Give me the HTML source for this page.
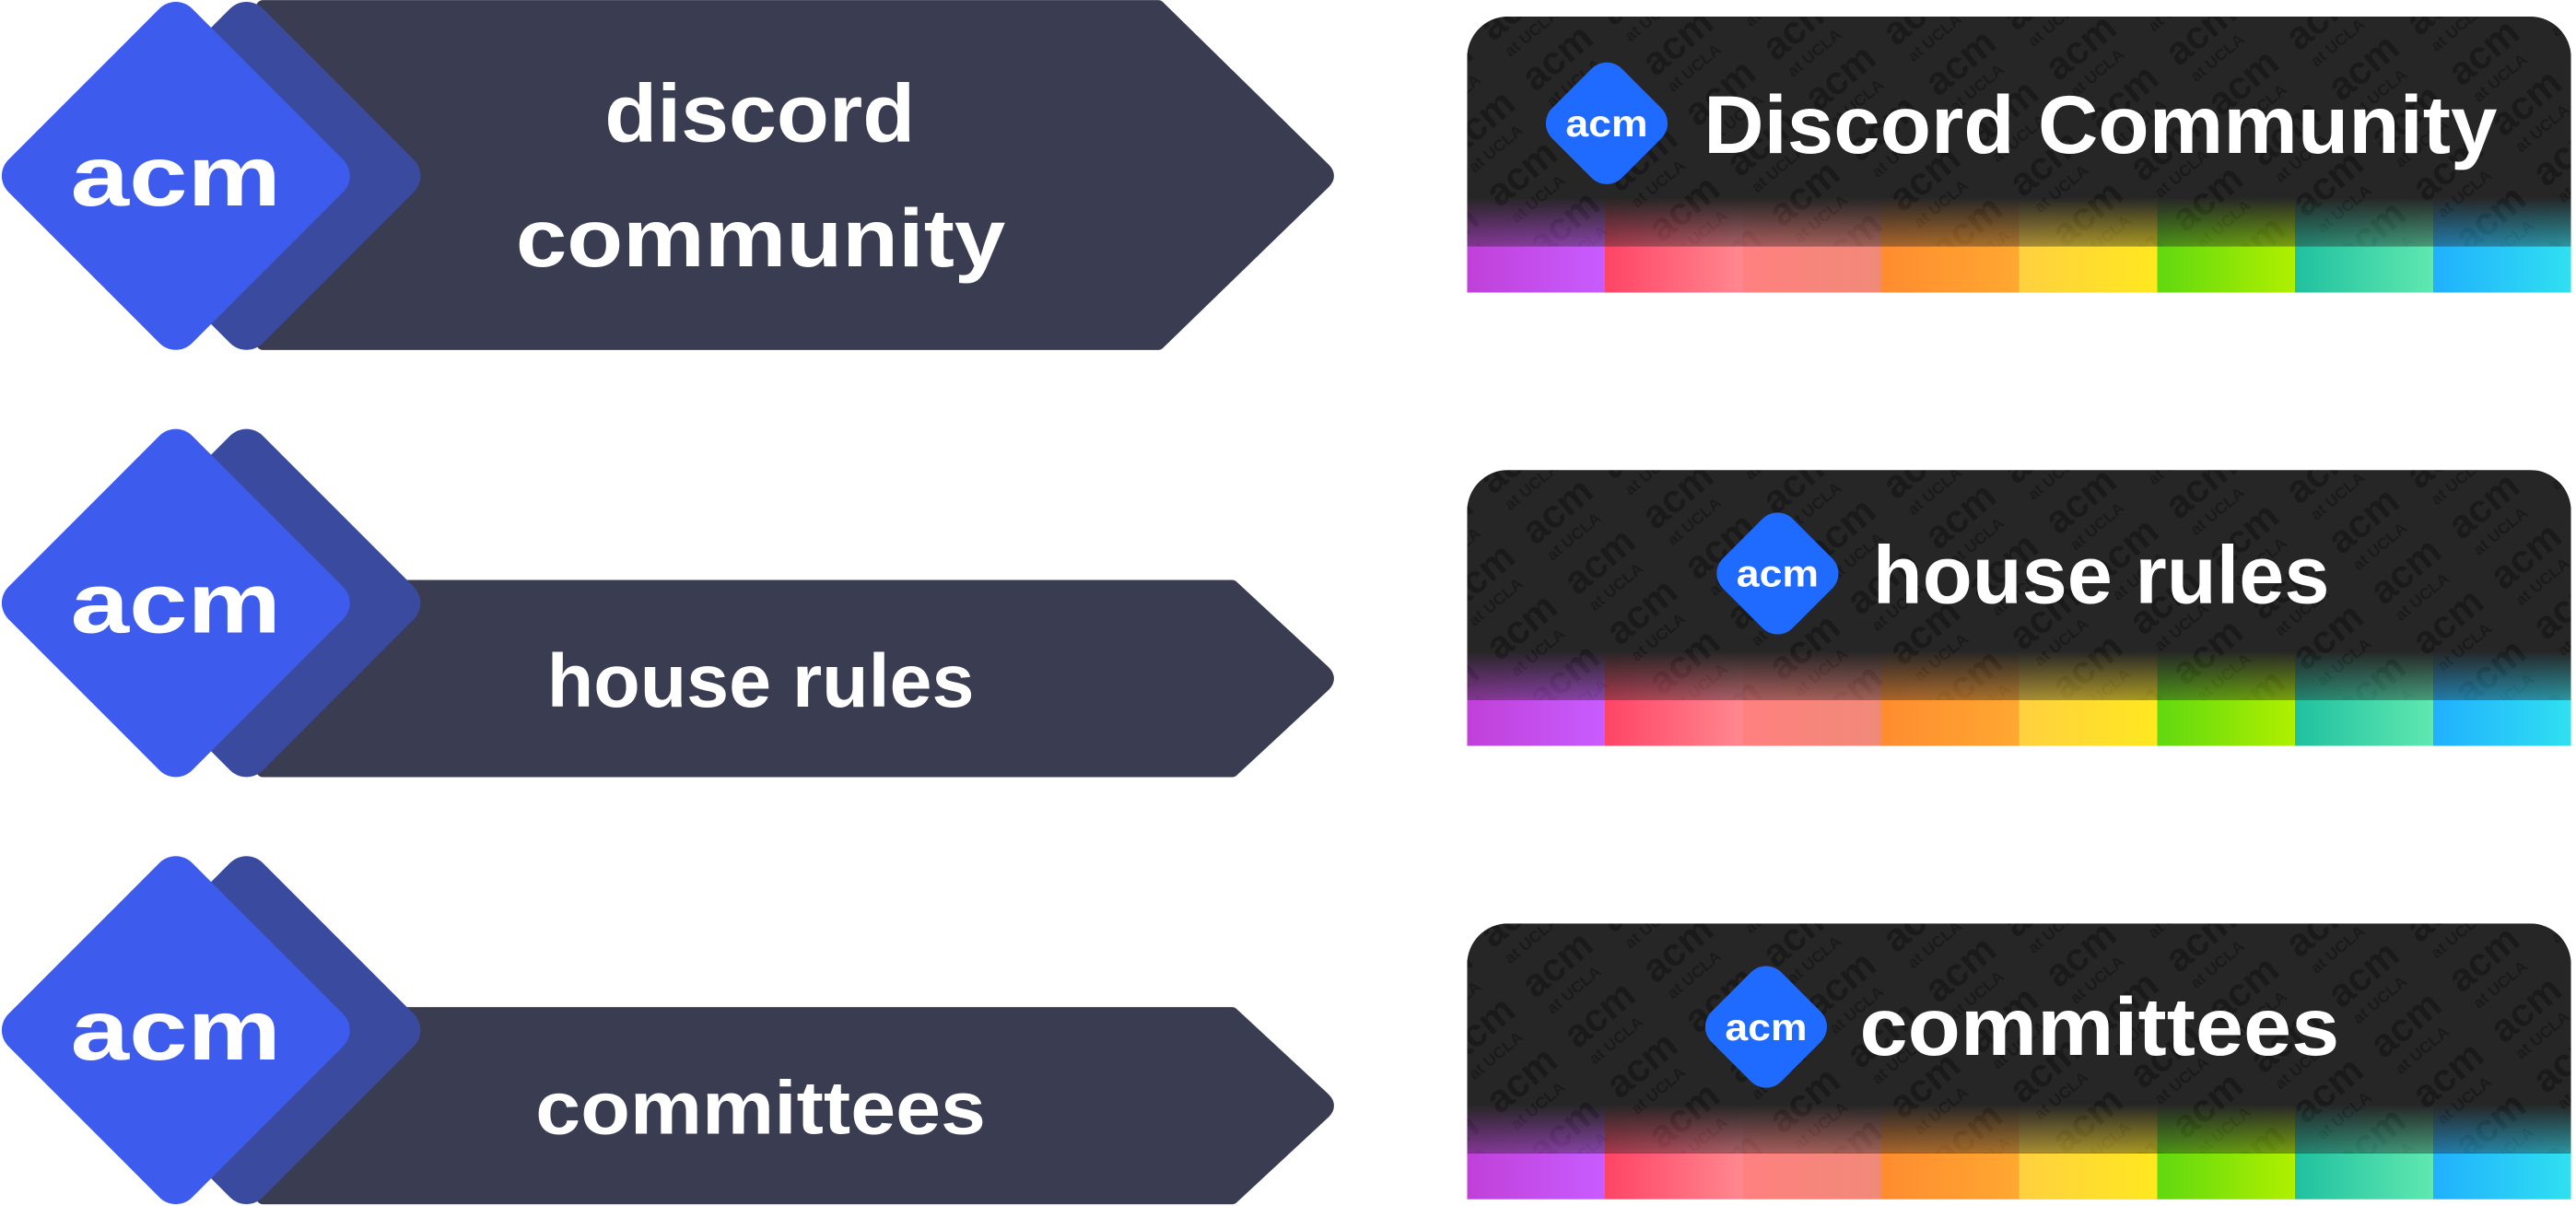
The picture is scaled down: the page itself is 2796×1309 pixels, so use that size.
<!DOCTYPE html>
<html><head><meta charset="utf-8"><style>
html,body{margin:0;padding:0;background:#fff;width:2796px;height:1309px;overflow:hidden}
svg{display:block}
text{font-family:"Liberation Sans",sans-serif;font-weight:bold}
</style></head><body>
<svg width="2796" height="1309" viewBox="0 0 1568 734" xmlns="http://www.w3.org/2000/svg">
<defs>
<linearGradient id="st" gradientUnits="userSpaceOnUse" x1="0" y1="0" x2="672" y2="0">
<stop offset="0" stop-color="#c040d8"/><stop offset=".125" stop-color="#c85cff"/>
<stop offset=".125" stop-color="#ff4466"/><stop offset=".25" stop-color="#ff8890"/>
<stop offset=".25" stop-color="#ff8080"/><stop offset=".375" stop-color="#f08a78"/>
<stop offset=".375" stop-color="#ff8c30"/><stop offset=".5" stop-color="#ffa830"/>
<stop offset=".5" stop-color="#ffd040"/><stop offset=".625" stop-color="#ffe820"/>
<stop offset=".625" stop-color="#60d810"/><stop offset=".75" stop-color="#b0f000"/>
<stop offset=".75" stop-color="#20c0a0"/><stop offset=".875" stop-color="#60e8b0"/>
<stop offset=".875" stop-color="#20b0ff"/><stop offset="1" stop-color="#30e0f0"/>
</linearGradient>
<linearGradient id="fv" x1="0" y1="0" x2="0" y2="1">
<stop offset="0" stop-color="#fff" stop-opacity="0"/><stop offset="1" stop-color="#fff" stop-opacity=".6"/>
</linearGradient>
<mask id="fm" maskUnits="userSpaceOnUse" x="0" y="110" width="672" height="30"><rect x="0" y="110" width="672" height="30" fill="url(#fv)"/></mask>
<pattern id="pt" width="62" height="40" patternUnits="userSpaceOnUse" patternTransform="rotate(-40)">
<rect width="62" height="40" fill="#262626"/>
<text x="2" y="22" font-size="24" fill="#1a1a1a" font-family="Liberation Sans" font-weight="bold">acm</text>
<text x="4" y="36" font-size="10" fill="#1a1a1a" font-family="Liberation Sans" font-weight="bold">at UCLA</text>
</pattern>
<clipPath id="cc"><path d="M0,25 a25,25 0 0 1 25,-25 H647 a25,25 0 0 1 25,25 V168 H0 Z"/></clipPath>
</defs>

<!-- left banner 1 -->
<path d="M160,4 H705 L806,103 Q810,107 806,111 L705,209 H160 L250,107 Z" fill="#3a3d52" stroke="#3a3d52" stroke-width="8" stroke-linejoin="round"/>
<rect x="71" y="28" width="158" height="158" rx="14" transform="rotate(45 150 107)" fill="#3a4b9f"/>
<rect x="28" y="28" width="158" height="158" rx="14" transform="rotate(45 107 107)" fill="#3d5bec"/>
<text x="43" y="125" font-size="52" fill="#fff" textLength="128" lengthAdjust="spacingAndGlyphs">acm</text>
<text x="368" y="86" font-size="50" fill="#fff" textLength="189" lengthAdjust="spacingAndGlyphs">discord</text>
<text x="314" y="162" font-size="50" fill="#fff" textLength="298" lengthAdjust="spacingAndGlyphs">community</text>

<!-- left banner 2 -->
<path d="M160,357 H750 L806,409 Q810,413 806,417 L750,469 H160 Z" fill="#3a3d52" stroke="#3a3d52" stroke-width="8" stroke-linejoin="round"/>
<rect x="71" y="288" width="158" height="158" rx="14" transform="rotate(45 150 367)" fill="#3a4b9f"/>
<rect x="28" y="288" width="158" height="158" rx="14" transform="rotate(45 107 367)" fill="#3d5bec"/>
<text x="43" y="385" font-size="52" fill="#fff" textLength="128" lengthAdjust="spacingAndGlyphs">acm</text>
<text x="333" y="430" font-size="46" fill="#fff" textLength="260" lengthAdjust="spacingAndGlyphs">house rules</text>

<!-- left banner 3 -->
<path d="M160,617 H750 L806,669 Q810,673 806,677 L750,729 H160 Z" fill="#3a3d52" stroke="#3a3d52" stroke-width="8" stroke-linejoin="round"/>
<rect x="71" y="548" width="158" height="158" rx="14" transform="rotate(45 150 627)" fill="#3a4b9f"/>
<rect x="28" y="548" width="158" height="158" rx="14" transform="rotate(45 107 627)" fill="#3d5bec"/>
<text x="43" y="645" font-size="52" fill="#fff" textLength="128" lengthAdjust="spacingAndGlyphs">acm</text>
<text x="326" y="690" font-size="46" fill="#fff" textLength="274" lengthAdjust="spacingAndGlyphs">committees</text>

<!-- right card 1 -->
<g transform="translate(893,10)">
<g clip-path="url(#cc)">
<rect width="672" height="168" fill="url(#pt)"/>
<rect y="110" width="672" height="30" fill="url(#st)" mask="url(#fm)"/>
<rect y="140" width="672" height="28" fill="url(#st)"/>
</g>
<rect x="55" y="35" width="60" height="60" rx="13" transform="rotate(45 85 65)" fill="#1f6bff"/>
<text x="60" y="73" font-size="23" fill="#fff" textLength="50" lengthAdjust="spacingAndGlyphs">acm</text>
<text x="144" y="83" font-size="50" fill="#fff" textLength="483" lengthAdjust="spacingAndGlyphs">Discord Community</text>
</g>

<!-- right card 2 -->
<g transform="translate(893,286)">
<g clip-path="url(#cc)">
<rect width="672" height="168" fill="url(#pt)"/>
<rect y="110" width="672" height="30" fill="url(#st)" mask="url(#fm)"/>
<rect y="140" width="672" height="28" fill="url(#st)"/>
</g>
<rect x="159" y="33" width="60" height="60" rx="13" transform="rotate(45 189 63)" fill="#1f6bff"/>
<text x="164" y="71" font-size="23" fill="#fff" textLength="50" lengthAdjust="spacingAndGlyphs">acm</text>
<text x="247" y="81" font-size="50" fill="#fff" textLength="278" lengthAdjust="spacingAndGlyphs">house rules</text>
</g>

<!-- right card 3 -->
<g transform="translate(893,562)">
<g clip-path="url(#cc)">
<rect width="672" height="168" fill="url(#pt)"/>
<rect y="110" width="672" height="30" fill="url(#st)" mask="url(#fm)"/>
<rect y="140" width="672" height="28" fill="url(#st)"/>
</g>
<rect x="152" y="33" width="60" height="60" rx="13" transform="rotate(45 182 63)" fill="#1f6bff"/>
<text x="157" y="71" font-size="23" fill="#fff" textLength="50" lengthAdjust="spacingAndGlyphs">acm</text>
<text x="239" y="80" font-size="50" fill="#fff" textLength="292" lengthAdjust="spacingAndGlyphs">committees</text>
</g>
</svg>
</body></html>
